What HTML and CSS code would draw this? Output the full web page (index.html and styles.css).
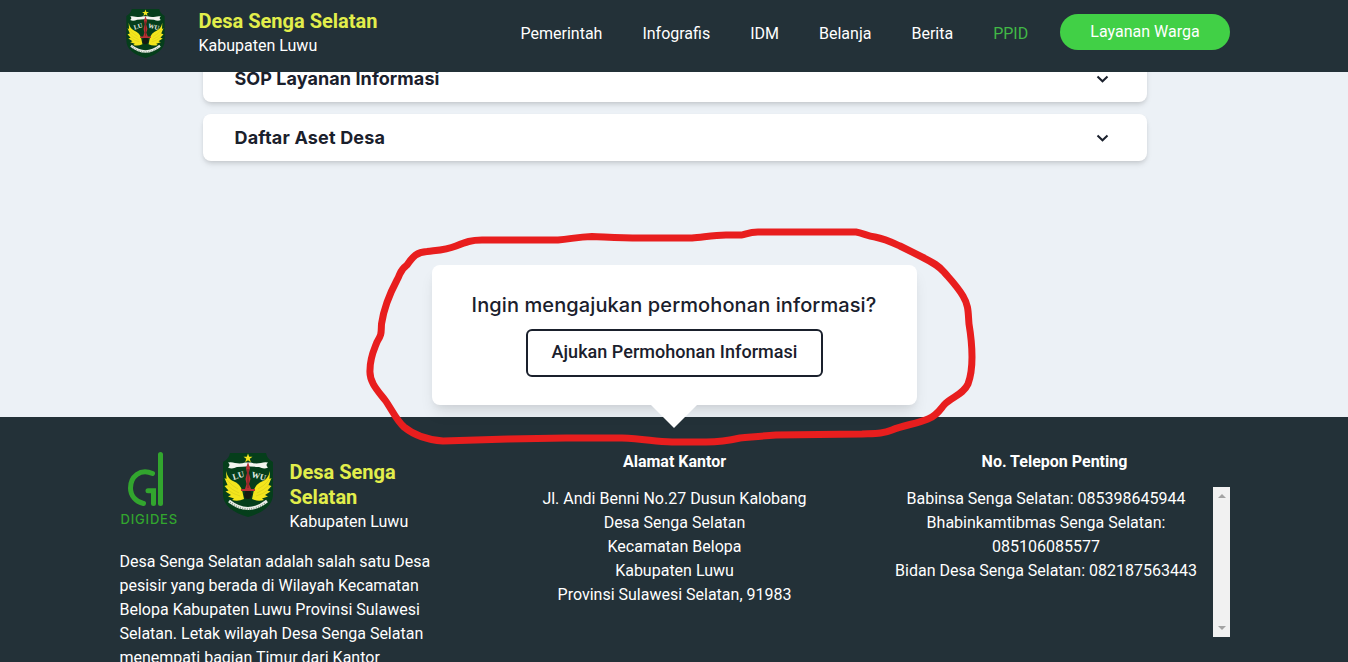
FILE: index.html
```html
<!DOCTYPE html>
<html lang="id">
<head>
<meta charset="utf-8">
<title>PPID - Desa Senga Selatan</title>
<link rel="stylesheet" href="styles.css">
</head>
<body>
<svg class="defs" width="0" height="0">
  <symbol id="emblem" viewBox="0 0 50 64">
    <path fill="#053e1b" d="M7 0H43Q44 6 50 9V41C50 53 39 60 25 64C11 60 0 53 0 41V9Q6 6 7 0Z"/>
    <path fill="#f3e51c" d="M25 .5l1.200 3.300h3.300l-2.700 2 1 3.400-2.800-2-2.800 2 1-3.400-2.700-2h3.300z"/>
    <path fill="#f4f5f0" d="M5 9.500Q9 9 12 10Q18 11 22 9.500H28Q32 11 38 10Q41 9 45 9.500Q42 12 45 14.500Q41 16.500 36 14Q30 13.500 27 13.500H23Q20 13.500 14 14Q9 16.500 5 14.500Q8 12 5 9.500Z"/>
    <g id="wing">
      <path fill="#f3e51c" d="M3 18Q5 26 10 28Q18 31 19.500 39L21 46Q15 49 9 47L11 45.500L5 43.500L8 42L2.500 38.500L5.500 37.500L1.500 33L4.500 32L1.500 25L3.500 26Z"/>
      <path fill="none" stroke="#c4be1b" stroke-width=".4" d="M4 27Q9 33 15 36M4 32Q9 37 16 40M5 37Q10 41 17 43"/>
    </g>
    <use href="#wing" transform="matrix(-1 0 0 1 50 0)"/>
    <path fill="#151b12" d="M23 37H27L29 41Q28 46 25 46Q21 46 21 42Z"/>
    <path fill="#b93034" d="M25 9L27 15L25.800 20L27.500 26L26 31L28 36H32V38H18V36H22L23.500 31L22.500 26L24 20L23 15Z"/>
    <path fill="none" stroke="#31120f" stroke-width=".5" d="M25 16V35"/>
    <text class="seal-text" transform="translate(10.500 27) rotate(-17)">LU</text>
    <text class="seal-text" transform="translate(28 24) rotate(15)">WU</text>
    <path fill="none" stroke="#e9ece6" stroke-width="3" d="M6 48Q25 63 44 48"/>
    <path fill="none" stroke="#5f7a64" stroke-width="2" stroke-dasharray=".6 1.700" d="M7 49.500Q25 63 43 49.500"/>
  </symbol>
</svg>

<header class="topbar">
  <div class="container topbar-inner">
    <a class="brand">
      <svg class="brand-logo"><use href="#emblem"/></svg>
      <span class="brand-text"><b class="village">Desa Senga Selatan</b><span class="regency">Kabupaten Luwu</span></span>
    </a>
    <nav class="menu">
      <a>Pemerintah</a><a>Infografis</a><a>IDM</a><a>Belanja</a><a>Berita</a><a class="active">PPID</a>
    </nav>
    <a class="cta">Layanan Warga</a>
  </div>
</header>

<main class="content">
  <section class="accordion">
    <div class="panel"><h2>SOP Layanan Informasi</h2><svg class="chevron" viewBox="0 0 12 8"><path d="M1 1.500L6 6.300L11 1.500"/></svg></div>
    <div class="panel"><h2 class="wide">Daftar Aset Desa</h2><svg class="chevron" viewBox="0 0 12 8"><path d="M1 1.500L6 6.300L11 1.500"/></svg></div>
  </section>
  <section class="request">
    <h3>Ingin mengajukan permohonan informasi?</h3>
    <a class="request-button">Ajukan Permohonan Informasi</a>
  </section>
</main>

<footer class="footer">
  <div class="container footer-grid">
    <div class="about">
      <div class="about-brand">
        <div class="digides">
          <svg viewBox="0 0 36 56"><path d="M24.500 21.500C12 16 2.500 25 2.500 36C2.500 44 8 50 15.500 51.500M20 38.700H25.500V51.500M32.500 2.500V51.500"/></svg>
          <span>DIGIDES</span>
        </div>
        <svg class="footer-logo"><use href="#emblem"/></svg>
        <div class="footer-name"><b class="village">Desa Senga Selatan</b><span class="regency">Kabupaten Luwu</span></div>
      </div>
      <p>Desa Senga Selatan adalah salah satu Desa pesisir yang berada di Wilayah Kecamatan Belopa Kabupaten Luwu Provinsi Sulawesi Selatan. Letak wilayah Desa Senga Selatan menempati bagian Timur dari Kantor</p>
    </div>
    <div class="address">
      <h4>Alamat Kantor</h4>
      <p>Jl. Andi Benni No.27 Dusun Kalobang<br>Desa Senga Selatan<br>Kecamatan Belopa<br>Kabupaten Luwu<br>Provinsi Sulawesi Selatan, 91983</p>
    </div>
    <div class="phones">
      <h4>No. Telepon Penting</h4>
      <div class="phone-box">
        <p>Babinsa Senga Selatan: 085398645944<br>Bhabinkamtibmas Senga Selatan: 085106085577<br>Bidan Desa Senga Selatan: 082187563443</p>
        <div class="scrollbar"><i class="arrow up"></i><i class="arrow down"></i></div>
      </div>
    </div>
  </div>
</footer>

<svg class="marker" viewBox="0 0 1348 662">
  <path d="M407 265C413 256 417 252 427 251.500C440 250 446 250 456 246C466 242 471 240 482 240L558 240C571 239 577 237 592 236.500C606 237 620 238 640 238L692 238C704 237 714 235 726 235L742 235C749 233 751 232 758 232L856 232C863 233 867 236 875 237C885 239 889 241 900 246L922 257C934 263 939 266 944 272C950 279 957 286 963 296C969 306 968 313 969 324C971 336 972 346 972 357C972 366 971 376 968 384C963 395 951 397 944 405C939 411 936 416 928 419C916 424 904 425 892 430C882 434 876 433.500 862 434L776 435C762 436 752 437 740 438C727 441 717 442 706 442L672 442C653 441 644 439 622 438L566 438L508 439L443 441C429 440 415 436 404 427C396 420 391 408 385 400C378 391 369 382 370 370C370 357 374 350 377 342C382 334 381 333 381.500 324C384 307 389 295 397 280C401 273 399 271 407 265"/>
</svg>
</body>
</html>
```
FILE: styles.css
```css
* { box-sizing: border-box; }
body {
  margin: 0;
  width: 1348px;
  height: 662px;
  overflow: hidden;
  position: relative;
  display: flex;
  flex-direction: column;
  background: #ecf1f6;
  color: #fff;
  font: 400 16px/24px Roboto, "Liberation Sans", sans-serif;
}
h2, h3, h4, p { margin: 0; }
.defs { position: absolute; }
.container { width: 1110.500px; margin-left: 119.500px; }
.seal-text { font: 700 8.500px "Liberation Serif", serif; fill: #e8eee8; }

.topbar { height: 72px; flex: none; background: #233138; z-index: 2; }
.topbar-inner { display: flex; align-items: flex-start; }
.brand { display: flex; width: 401px; padding-left: 5px; }
.brand-logo { width: 39px; height: 49px; margin: 9px 34px 0 1px; }
.brand-text { display: flex; flex-direction: column; padding-top: 9px; }
.village { color: #e2ee4b; font-size: 20px; font-weight: 700; line-height: 25px; }
.regency { line-height: 24px; }
.menu { display: flex; gap: 40px; padding-top: 22px; width: 539.500px; }
.active { color: #41b846; }
.cta {
  width: 170px;
  height: 36px;
  border-radius: 18px;
  background: #41d046;
  margin-top: 14px;
  line-height: 36px;
  text-align: center;
}

.content { height: 345px; flex: none; display: flex; flex-direction: column; align-items: center; color: #1a202c; z-index: 1; }
.accordion { width: 944px; margin: -17px 0 0 2px; display: flex; flex-direction: column; gap: 12px; }
.panel {
  height: 47px;
  background: #fff;
  border-radius: 8px;
  padding: 0 38px 0 31.500px;
  display: flex;
  justify-content: space-between;
  align-items: center;
  box-shadow: 0 4px 6px -1px rgba(0, 0, 0, .1), 0 2px 4px -1px rgba(0, 0, 0, .1);
}
.panel h2 { font: 700 18px/27px Inter, sans-serif; letter-spacing: .07px; }
.panel .wide { letter-spacing: .18px; }
.chevron { width: 13px; height: 8px; fill: none; stroke: #1a202c; stroke-width: 2; }
.request {
  position: relative;
  width: 485px;
  height: 140px;
  flex: none;
  margin-top: 104px;
  padding-top: 25px;
  background: #fff;
  border-radius: 8px;
  display: flex;
  flex-direction: column;
  align-items: center;
  box-shadow: 0 10px 15px -3px rgba(0, 0, 0, .1), 0 4px 6px -2px rgba(0, 0, 0, .05);
}
.request::after {
  content: "";
  position: absolute;
  left: 219px;
  top: 139.500px;
  border: 23px solid transparent;
  border-top-color: #fff;
  border-bottom: 0;
}
.request h3 { font: 500 20px/30px Inter, sans-serif; letter-spacing: .1px; white-space: nowrap; }
.request-button {
  width: 297px;
  height: 48px;
  margin-top: 9px;
  padding-left: 1px;
  border: 2px solid #1a202c;
  border-radius: 6px;
  font-size: 18px;
  font-weight: 500;
  line-height: 42px;
  letter-spacing: .03px;
  text-align: center;
}

.footer { height: 245px; flex: none; background: #233138; padding-top: 33px; }
.footer-grid { display: grid; grid-template-columns: 317px 1fr 363px; }
.about-brand { display: flex; height: 100px; }
.digides { width: 58px; display: flex; flex-direction: column; padding-top: 2px; }
.digides svg {
  width: 36px;
  height: 56px;
  margin-left: 8.500px;
  fill: none;
  stroke: #32a52e;
  stroke-width: 5;
  stroke-linecap: round;
}
.digides span { color: #32a52e; font: 500 13px/16px Inter, sans-serif; letter-spacing: .8px; margin: 2.500px 0 0 1px; white-space: nowrap; }
.footer-logo { width: 50px; height: 64px; margin: 3px 17px 0 45px; flex: none; }
.footer-name { width: 125px; padding-top: 10px; display: flex; flex-direction: column; }
.address { width: 320px; margin-left: 78px; text-align: center; }
.phones { text-align: center; }
h4 { font-size: 16px; font-weight: 700; line-height: 24px; }
.phones h4 { margin-left: 12px; }
.address p { margin-top: 13px; }
.phone-box { display: flex; height: 150px; margin-top: 13px; }
.phone-box p { flex: 1; padding: 0 9px 0 21px; }
.scrollbar { width: 17px; background: #f1f1f1; display: flex; flex-direction: column; justify-content: space-between; align-items: center; padding: 7px 0; }
.arrow { border: 4px solid transparent; }
.up { border-top: 0; border-bottom-color: #a3a3a3; }
.down { border-bottom: 0; border-top-color: #a3a3a3; }

.marker { position: absolute; inset: 0; width: 1348px; height: 662px; z-index: 3; pointer-events: none; }
.marker path { fill: none; stroke: #e81e1e; stroke-width: 7; stroke-linejoin: round; stroke-linecap: round; }
```
